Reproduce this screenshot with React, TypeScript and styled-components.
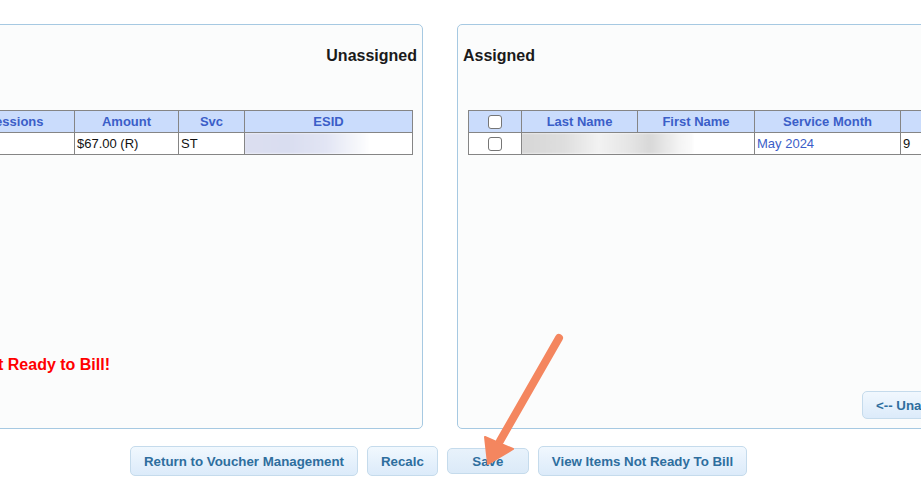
import styled, { createGlobalStyle } from 'styled-components';

const GlobalStyle = createGlobalStyle`
  body {
    margin: 0;
    background: #ffffff;
    font-family: "Liberation Sans", Arial, sans-serif;
  }
`;

const Page = styled.div`
  position: relative;
  width: 921px;
  height: 477px;
  overflow: hidden;
  background: #ffffff;
`;

const PanelsRow = styled.div`
  display: flex;
  gap: 34px;
  padding-top: 24px;
  margin-left: -488px; // left panel is cut off by the screenshot
`;

const Panel = styled.div`
  flex: none;
  width: 911px;
  height: 405px;
  box-sizing: border-box;
  padding: 0 10px 6px;
  display: flex;
  flex-direction: column;
  border: 1px solid #a6c9e2;
  border-radius: 5px;
  background: #fbfcfc;
`;

const Title = styled.div<{ $align: 'left' | 'right' }>`
  margin-top: 22px;
  text-align: ${p => p.$align};
  font-size: 16px;
  line-height: 18px;
  font-weight: bold;
  color: #1a1a1a;
  margin-right: ${p => (p.$align === 'right' ? '-5px' : '0')};
  margin-left: ${p => (p.$align === 'left' ? '-5px' : '0')};
`;

const Grid = styled.table`
  margin-top: 45px;
  width: 889px;
  table-layout: fixed;
  border-collapse: collapse;
  font-size: 13px;
`;

const Th = styled.th`
  height: 21px;
  padding: 0;
  border: 1px solid #858585;
  background: #cadcfc;
  color: #3b5ec8;
  font-weight: bold;
  text-align: center;
  overflow: hidden;
  white-space: nowrap;
`;

const Td = styled.td<{ $blue?: boolean; $center?: boolean }>`
  height: 21px;
  padding: 0 2px;
  border: 1px solid #858585;
  background: #ffffff;
  color: ${p => (p.$blue ? '#3b5ec8' : '#111111')};
  text-align: ${p => (p.$center ? 'center' : 'left')};
  white-space: nowrap;
  overflow: hidden;
`;

const Check = styled.span`
  display: inline-block;
  width: 12px;
  height: 12px;
  border: 1px solid #767676;
  border-radius: 3px;
  background: #ffffff;
  vertical-align: middle;
`;

const Blur = styled.div<{ $w: number; $tone: 'gray' | 'blue' }>`
  width: ${p => p.$w}px;
  height: 21px;
  margin-left: -1px;
  filter: blur(1px);
  background: ${p =>
    p.$tone === 'gray'
      ? 'linear-gradient(90deg, #d6d6d6 0%, #dedede 25%, #f2f2f2 45%, #e6e6e6 62%, #d8d8d8 75%, #f4f4f4 92%, #fbfbfb 100%)'
      : 'linear-gradient(90deg, #dcdff0 0%, #d9ddf0 35%, #e2e5f4 65%, #f6f7fb 90%, #ffffff 100%)'};
`;

const Spacer = styled.div`
  flex: 1;
`;

const Message = styled.div`
  padding-left: 29px;
  text-align: center;
  font-size: 16px;
  line-height: 18px;
  font-weight: bold;
  color: #ff0000;
  margin-bottom: 20px;
`;

const PanelActions = styled.div<{ $indent: number }>`
  display: flex;
  padding-left: ${p => p.$indent}px;
`;

const Button = styled.button<{ $pressed?: boolean; $min?: number }>`
  height: ${p => (p.$pressed ? '26px' : '30px')};
  margin: ${p => (p.$pressed ? '2px 0' : '0')};
  min-width: ${p => (p.$min ? `${p.$min}px` : 'auto')};
  padding: 0 13px;
  border: 1px solid #c5dbec;
  border-radius: 5px;
  background: ${p =>
    p.$pressed
      ? 'linear-gradient(180deg, #e8f2fb 0%, #dbeaf8 100%)'
      : 'linear-gradient(180deg, #f1f8fe 0%, #e6f1fc 50%, #dcebfa 100%)'};
  color: #2e6e9e;
  font-family: "Liberation Sans", Arial, sans-serif;
  font-size: 13.3px;
  font-weight: bold;
  white-space: nowrap;
  cursor: pointer;
`;

const SmallButton = styled(Button)`
  height: 28px;
`;

const Footer = styled.div`
  display: flex;
  gap: 9px;
  padding: 17px 0 0 130px;
`;

const Overlay = styled.svg`
  position: absolute;
  left: 0;
  top: 0;
  pointer-events: none;
`;

const cols = [53, 116, 117, 146, 119, 104, 66, 168];

const Cols = () => (
  <colgroup>
    {cols.map((w, i) => (
      <col key={i} style={{ width: w }} />
    ))}
  </colgroup>
);

const Header = () => (
  <thead>
    <tr>
      <Th><Check /></Th>
      <Th>Last Name</Th>
      <Th>First Name</Th>
      <Th>Service Month</Th>
      <Th>Sessions</Th>
      <Th>Amount</Th>
      <Th>Svc</Th>
      <Th>ESID</Th>
    </tr>
  </thead>
);

const Row = ({ nameWidth }: { nameWidth: number }) => (
  <tr>
    <Td $center><Check /></Td>
    <Td colSpan={2} style={{ padding: 0 }}><Blur $w={nameWidth} $tone="gray" /></Td>
    <Td $blue>May 2024</Td>
    <Td>9</Td>
    <Td>$67.00 (R)</Td>
    <Td>ST</Td>
    <Td style={{ padding: 0 }}><Blur $w={126} $tone="blue" /></Td>
  </tr>
);

const App = () => {
  return (
    <Page>
      <GlobalStyle />
      <PanelsRow>
        <Panel>
          <Title $align="right">Unassigned</Title>
          <Grid>
            <Cols />
            <Header />
            <tbody>
              <Row nameWidth={170} />
            </tbody>
          </Grid>
          <Spacer />
          <Message>There are Items Not Ready to Bill!</Message>
          <PanelActions $indent={384}>
            <SmallButton>Assign --&gt;</SmallButton>
          </PanelActions>
        </Panel>
        <Panel>
          <Title $align="left">Assigned</Title>
          <Grid>
            <Cols />
            <Header />
            <tbody>
              <Row nameWidth={172} />
            </tbody>
          </Grid>
          <Spacer />
          <PanelActions $indent={394}>
            <SmallButton style={{ marginBottom: 3 }}>&lt;-- Unassign</SmallButton>
          </PanelActions>
        </Panel>
      </PanelsRow>
      <Footer>
        <Button>Return to Voucher Management</Button>
        <Button>Recalc</Button>
        <Button $pressed $min={82}>Save</Button>
        <Button>View Items Not Ready To Bill</Button>
      </Footer>
      <Overlay width="921" height="477" viewBox="0 0 921 477">
        <line x1="559" y1="338" x2="500" y2="441" stroke="#f4865f" strokeWidth="8" strokeLinecap="round" />
        <polygon points="485,437 513,449 488,464" fill="#f4865f" stroke="#f4865f" strokeWidth="2" strokeLinejoin="round" />
      </Overlay>
    </Page>
  );
};

export default App;
